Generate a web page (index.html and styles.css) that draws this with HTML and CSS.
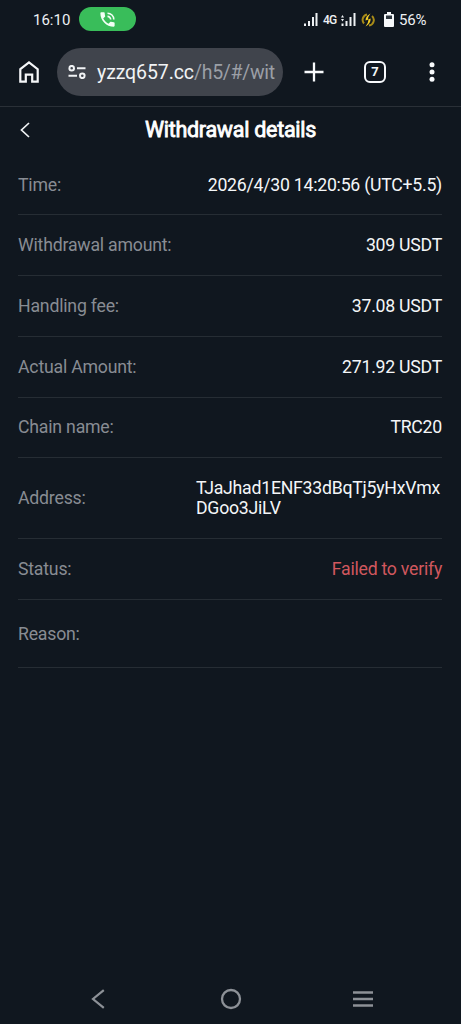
FILE: index.html
```html
<!DOCTYPE html>
<html lang="en">
<head>
<meta charset="utf-8">
<meta name="viewport" content="width=device-width, initial-scale=1">
<title>Withdrawal details</title>
<link rel="stylesheet" href="styles.css">
</head>
<body>
<div class="phone">
  <div class="status-bar">
    <span class="clock">16:10</span>
    <span class="call-pill">
      <svg width="19" height="19" viewBox="0 0 24 24" fill="#f2fff5"><path d="M20 15.500c-1.200 0-2.400-.2-3.600-.6-.3-.1-.7 0-1 .2l-2.200 2.200c-2.800-1.400-5.100-3.800-6.600-6.600l2.200-2.200c.3-.3.4-.7.200-1-.3-1.100-.5-2.300-.5-3.500 0-.6-.4-1-1-1H4c-.6 0-1 .4-1 1 0 9.400 7.600 17 17 17 .6 0 1-.4 1-1v-3.500c0-.6-.4-1-1-1zM19 12h2a9 9 0 0 0-9-9v2a7 7 0 0 1 7 7zm-4 0h2c0-2.800-2.200-5-5-5v2c1.700 0 3 1.300 3 3z"/></svg>
    </span>
    <div class="indicators">
      <svg class="signal" width="14" height="13" viewBox="0 0 14 13" fill="#eef1f4"><path d="M0 10.500h2V13H0zM4 8h2v5H4zM8 4h2v9H8zM11.500 0h2v13h-2z"/></svg>
      <span class="network">4G</span>
      <svg class="signal-alt" width="15" height="13" viewBox="0 0 15 13" fill="#eef1f4"><path d="M0 4.500L1.500 2 3 4.500zM0 6h3L1.500 8.500zM.5 10.500h2V13h-2zM4.500 8h2v5h-2zM8.500 4h2v9h-2zM12.500 0h2v13h-2z"/></svg>
      <svg class="sync" width="14" height="14" viewBox="0 0 14 14" fill="none"><path d="M6 1.500A5.500 5.500 0 0 0 3 10.500M8 12.500A5.500 5.500 0 0 0 11 3" stroke="#a88b18" stroke-width="2"/><path d="M9.500.5Q4.500 3 4.500 7.500L7.500 6.500Q7.500 10 4.500 13.500Q9.700 11 9.700 5.500L7 6.500Q7 3.500 9.500.5z" fill="#f1cc27"/></svg>
      <svg class="battery" width="10" height="15" viewBox="0 0 10 15"><path d="M3 0h4v2h2q1 0 1 1v11q0 1-1 1H1q-1 0-1-1V3q0-1 1-1h2z" fill="#f7f9fb"/><path d="M2 3.500h6V7H2z" fill="#303840"/></svg>
      <span class="percent">56%</span>
    </div>
  </div>

  <div class="browser-bar">
    <svg class="home" width="20" height="22" viewBox="0 0 20 22" fill="none" stroke="#f5f7f9" stroke-width="2.200"><path d="M1.300 8.200L10 1.500l8.700 6.700v12.500h-5.500v-7H6.800v7H1.300z"/></svg>
    <div class="address-bar">
      <svg class="tune" width="18" height="14" viewBox="0 0 18 14" fill="none" stroke="#f1f3f5" stroke-width="2"><circle cx="3.700" cy="3.200" r="2.300"/><path d="M9 3.200h8.500M.5 10.800H9"/><circle cx="14.300" cy="10.800" r="2.300"/></svg>
      <div class="url">yzzq657.cc<span class="path">/h5/#/wit</span></div>
    </div>
    <svg class="plus" width="20" height="20" viewBox="0 0 20 20" stroke="#f8fafc" stroke-width="2.300"><path d="M10 .5v19M.5 10h19"/></svg>
    <span class="tabs">7</span>
    <svg class="more" width="6" height="20" viewBox="0 0 6 20" fill="#f8fafc"><circle cx="3" cy="2.700" r="2.500"/><circle cx="3" cy="10" r="2.500"/><circle cx="3" cy="17.300" r="2.500"/></svg>
  </div>

  <header class="title-bar">
    <svg class="back" width="10" height="16" viewBox="0 0 10 16" fill="none" stroke="#f1f3f5" stroke-width="1.700"><path d="M9 1L1.500 8 9 15"/></svg>
    <h1>Withdrawal details</h1>
  </header>

  <main class="details">
    <div class="row first"><span class="label">Time:</span><span class="value">2026/4/30 14:20:56 (UTC+5.5)</span></div>
    <div class="row"><span class="label">Withdrawal amount:</span><span class="value">309 USDT</span></div>
    <div class="row"><span class="label">Handling fee:</span><span class="value">37.08 USDT</span></div>
    <div class="row"><span class="label">Actual Amount:</span><span class="value">271.92 USDT</span></div>
    <div class="row chain"><span class="label">Chain name:</span><span class="value">TRC20</span></div>
    <div class="row address"><span class="label">Address:</span><span class="value">TJaJhad1ENF33dBqTj5yHxVmxDGoo3JiLV</span></div>
    <div class="row"><span class="label">Status:</span><span class="value failed">Failed to verify</span></div>
    <div class="row reason"><span class="label">Reason:</span><span class="value"></span></div>
  </main>

  <nav class="nav-bar">
    <svg width="14" height="20" viewBox="0 0 14 20" fill="none" stroke="#8d9197" stroke-width="2.200"><path d="M12.800 1.200L2 10l10.800 8.800"/></svg>
    <svg class="circle" width="22" height="22" viewBox="0 0 22 22" fill="none" stroke="#8d9197" stroke-width="2.300"><circle cx="11" cy="11" r="9"/></svg>
    <svg width="22" height="18" viewBox="0 0 22 18" stroke="#8d9197" stroke-width="2.400"><path d="M1 2.500h20M1 9h20M1 15.500h20"/></svg>
  </nav>
</div>
</body>
</html>
```
FILE: styles.css
```css
* { box-sizing: border-box; }
body { margin: 0; background: #10171f; color: #f5f7f9; font-family: Roboto, sans-serif; }
svg { display: block; flex: none; }
.phone { display: flex; flex-direction: column; height: 1024px; overflow: hidden; }

.status-bar { display: flex; align-items: center; height: 38px; padding-left: 33px; font-size: 15px; line-height: 20px; color: #edf0f3; }
.clock { width: 46px; padding-top: 2px; }
.call-pill { display: flex; align-items: center; justify-content: center; width: 57px; height: 24px; border-radius: 12px; background: #39bd5a; }
.indicators { display: flex; align-items: center; margin-left: 168px; padding-top: 1px; }
.network { width: 14px; margin-left: 5px; font-size: 12px; line-height: 14px; letter-spacing: -0.8px; font-weight: 500; }
.signal-alt { margin-left: 4px; }
.sync { margin-left: 5px; }
.battery { margin-left: 9px; }
.percent { margin-left: 5px; padding-top: 1px; letter-spacing: -0.2px; }

.browser-bar { display: flex; align-items: center; height: 69px; padding: 0 26px 1px 19px; border-bottom: 1px solid #2a3037; }
.address-bar { display: flex; align-items: center; width: 226px; height: 48px; margin-left: 18px; padding: 0 9px 0 11px; border-radius: 24px; background: #40444c; }
.url { flex: 1; margin-left: 11px; padding-top: 2px; white-space: nowrap; font-size: 19.5px; line-height: 26px; letter-spacing: -0.1px; color: #f1f3f5; }
.path { color: #9b9fa6; letter-spacing: -0.3px; }
.plus { margin-left: 21px; }
.tabs { display: flex; align-items: center; justify-content: center; width: 22px; height: 22px; margin-left: 40px; border: 2px solid #f8fafc; border-radius: 6px; font-size: 13px; line-height: 16px; font-weight: 700; }
.more { margin-left: auto; }

.title-bar { display: grid; grid-template-columns: 40px 1fr 40px; align-items: center; height: 47px; padding-bottom: 2px; }
.back { margin-left: 20px; }
h1 { margin: 0; text-align: center; font-size: 21.5px; line-height: 28px; font-weight: 400; letter-spacing: -0.27px; -webkit-text-stroke: 0.8px #fff; color: #fff; }

.details { flex: 1; padding: 0 19px 0 18px; font-size: 17.7px; line-height: 20px; letter-spacing: -0.25px; }
.row { display: flex; align-items: center; justify-content: space-between; height: 61px; padding-bottom: 1px; border-bottom: 1px solid #262d34; }
.first { padding: 1px 0 0; }
.label { color: #888c93; letter-spacing: -0.21px; }
.value { color: #f4f6f8; }
.chain { height: 60px; }
.address { height: 81px; }
.address .value { width: 246px; overflow-wrap: anywhere; }
.reason { height: 68px; padding: 1px 0 0; }
.failed { color: #d1575e; }

.nav-bar { display: flex; align-items: center; justify-content: space-between; height: 50px; padding: 0 87px 0 91px; }
.circle { margin-left: 4px; }
```
